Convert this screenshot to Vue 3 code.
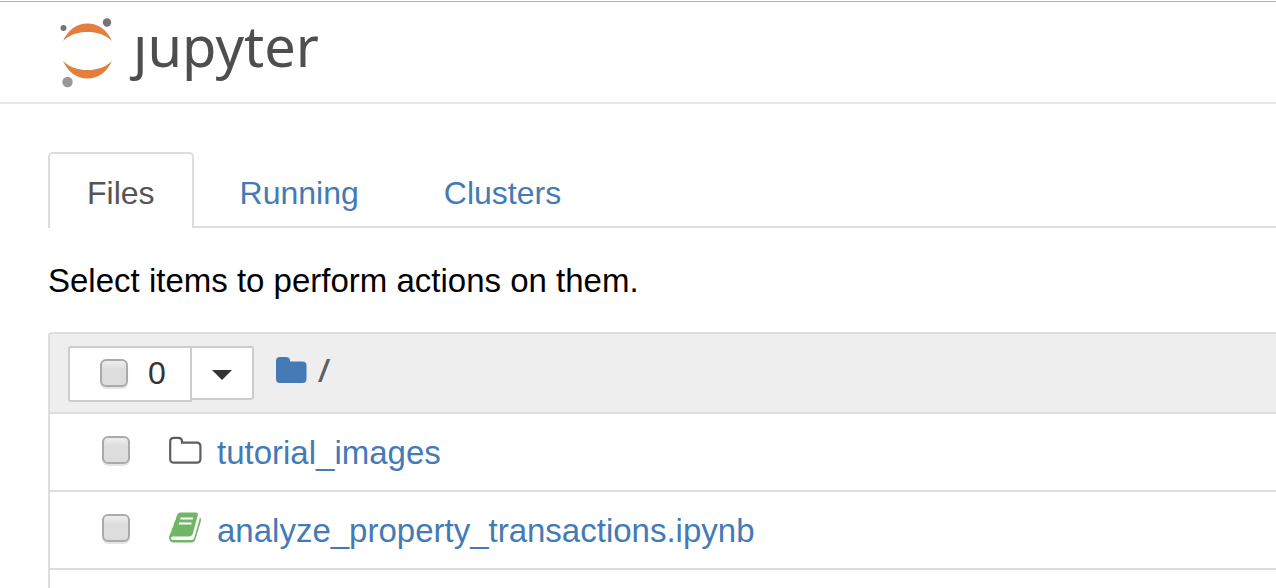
<script setup>
import { ref, computed } from 'vue'

const tabs = ['Files', 'Running', 'Clusters']
const active = ref('Files')
const items = ref([
  { name: 'tutorial_images', kind: 'folder', checked: false },
  { name: 'analyze_property_transactions.ipynb', kind: 'notebook', checked: false }
])
const count = computed(() => items.value.filter((item) => item.checked).length)
const all = computed({
  get: () => count.value === items.value.length,
  set: (value) => items.value.forEach((item) => { item.checked = value })
})
</script>

<template>
  <div class="page">
    <header class="header">
      <a class="logo" href="#" aria-label="jupyter">
        <svg class="planet" width="56" height="72" viewBox="0 0 56 72" aria-hidden="true">
          <path d="M4 25C9 14 17 7.500 28.500 7.500S48 14 53 25C46 18.500 38 16 28.500 16S11 18.500 4 25Z" fill="#e37e3f" />
          <path d="M4 45C9 55.500 17 62.500 28.500 62.500S48 55.500 53 45C46 51.500 38 54 28.500 54S11 51.500 4 45Z" fill="#e37e3f" />
          <circle cx="4.500" cy="12" r="3" fill="#757575" />
          <circle cx="48" cy="6.500" r="4.200" fill="#757575" />
          <circle cx="8.500" cy="66" r="5.200" fill="#989898" />
        </svg>
        <span class="wordmark">ȷupyter</span>
      </a>
    </header>

    <main class="content">
      <nav class="tabs">
        <a
          v-for="tab in tabs"
          :key="tab"
          href="#"
          class="tab"
          :class="{ active: tab === active }"
          @click.prevent="active = tab"
        >{{ tab }}</a>
      </nav>

      <p class="hint">Select items to perform actions on them.</p>

      <section class="list">
        <div class="list-header">
          <div class="group">
            <label class="select-all">
              <input v-model="all" type="checkbox" class="check" aria-label="Select all">
              <span>{{ count }}</span>
            </label>
            <button class="toggle" type="button" aria-label="Select by type">
              <svg width="20" height="10" viewBox="0 0 20 10"><path d="M0 0H20L10 10Z" fill="#333" /></svg>
            </button>
          </div>
          <div class="crumbs">
            <a href="#" aria-label="Home">
              <svg width="31" height="26" viewBox="0 0 31 26"><path d="M0 4Q0 0 4 0H10Q14 0 14 4V4.500H26.500Q30.500 4.500 30.500 8.500V22Q30.500 26 26.500 26H4Q0 26 0 22Z" fill="#447ab5" /></svg>
            </a>
            <span class="slash">/</span>
          </div>
        </div>

        <div v-for="item in items" :key="item.name" class="row">
          <input v-model="item.checked" type="checkbox" class="check" :aria-label="item.name">
          <svg v-if="item.kind === 'folder'" class="icon" width="34" height="32" viewBox="0 0 34 32" aria-hidden="true">
            <path d="M2.200 7.500Q2.200 3.800 5.900 3.800H10.300Q14 3.800 14 7.500V8.600H28.700Q32.400 8.600 32.400 12.300V25Q32.400 28.700 28.700 28.700H5.900Q2.200 28.700 2.200 25Z" fill="none" stroke="#5e5e5e" stroke-width="2.200" />
          </svg>
          <svg v-else class="icon" width="34" height="32" viewBox="0 0 34 32" aria-hidden="true">
            <path d="M12 .5H27.500Q30.500.5 29.700 3.500L25 21Q24 24.500 21 24.500H5Q3 24.500 2.800 26.200Q3 28 5.500 28H23.500Q25.500 28 26.200 26L31.500 7.500Q31.900 6 31.500 5Q33.700 6.500 32.900 9L27.500 27Q26.500 30.500 23 30.500H6Q1.500 30.500 1.200 26.300Q1 24.500 1.700 22.500Q3.500 20 3.900 17Q5.600 14 6.100 11Q7.800 8.500 8.200 5.500Q9.500 1 12 .5Z" fill="#71b567" />
            <path d="M12.500 6.500H25M11 11.500H23.500" stroke="#fff" stroke-width="2" />
          </svg>
          <a href="#" class="name">{{ item.name }}</a>
        </div>
        <div class="row-end" />
      </section>
    </main>
  </div>
</template>

<style>
body {
  background: #fff;
}
</style>

<style scoped>
.page {
  padding-top: 1px;
  font: 33px/46px "Liberation Sans", Arial, sans-serif;
  color: #000;
}
.page * {
  box-sizing: border-box;
}
a {
  color: #447ab5;
  text-decoration: none;
}
.header {
  height: 103px;
  padding: 14px 59px;
  border-top: 1px solid #b0b0b0;
  border-bottom: 2px solid #e7e7e7;
}
.logo {
  display: inline-flex;
  gap: 18px;
}
.planet {
  display: block;
}
.wordmark {
  color: #4e4e4e;
  font: 56px/58px "Noto Sans", "Open Sans", sans-serif;
}
.content {
  padding: 48px 0 0 48px;
}
.tabs {
  display: flex;
  gap: 7px;
  border-bottom: 2px solid #ddd;
  font-size: 32px;
}
.tab {
  padding: 16px 37px 12px;
  margin-bottom: -2px;
  border: 2px solid transparent;
  border-bottom: 0;
  border-radius: 5px 5px 0 0;
}
.tab.active {
  color: #555;
  background: #fff;
  border-color: #ddd;
}
.hint {
  margin: 30px 0 28px;
}
.list {
  border: 2px solid #ddd;
  border-width: 2px 0 0 2px;
  border-radius: 4px 0 0 0;
}
.list-header {
  display: flex;
  align-items: flex-start;
  height: 78px;
  padding: 12px 18px;
  background: #eee;
}
.group {
  display: flex;
  align-items: flex-start;
  color: #333;
  font-size: 32px;
}
.select-all {
  display: flex;
  align-items: center;
  gap: 20px;
  height: 56px;
  padding: 0 24px 2px 30px;
  background: #fff;
  border: 2px solid #ccc;
  border-radius: 3px 0 0 3px;
}
.toggle {
  display: flex;
  align-items: center;
  justify-content: center;
  width: 64px;
  height: 54px;
  margin-left: -2px;
  padding: 4px 0 0;
  background: #fff;
  border: 2px solid #ccc;
  border-radius: 0 3px 3px 0;
}
.check {
  appearance: none;
  flex: none;
  width: 28px;
  height: 28px;
  margin: 0;
  border: 2px solid #aaa;
  border-radius: 6px;
  background: linear-gradient(#eee, #ddd 35%, #ddd);
  box-shadow: 0 2px 1px #e4e4e4;
}
.check:checked {
  background: #447ab5;
}
.crumbs {
  display: flex;
  align-items: center;
  gap: 11px;
  height: 48px;
  margin-left: 22px;
  color: #5e5e5e;
}
.crumbs svg {
  display: block;
}
.slash {
  font-family: "Noto Sans", sans-serif;
  font-weight: 500;
}
.row {
  display: flex;
  align-items: center;
  height: 78px;
  padding: 0 52px 4px;
  border-top: 2px solid #ddd;
}
.row-end {
  height: 20px;
  border-top: 2px solid #ddd;
}
.icon {
  flex: none;
  margin: 0 15px 0 38px;
}
.name {
  padding-top: 6px;
}
</style>
